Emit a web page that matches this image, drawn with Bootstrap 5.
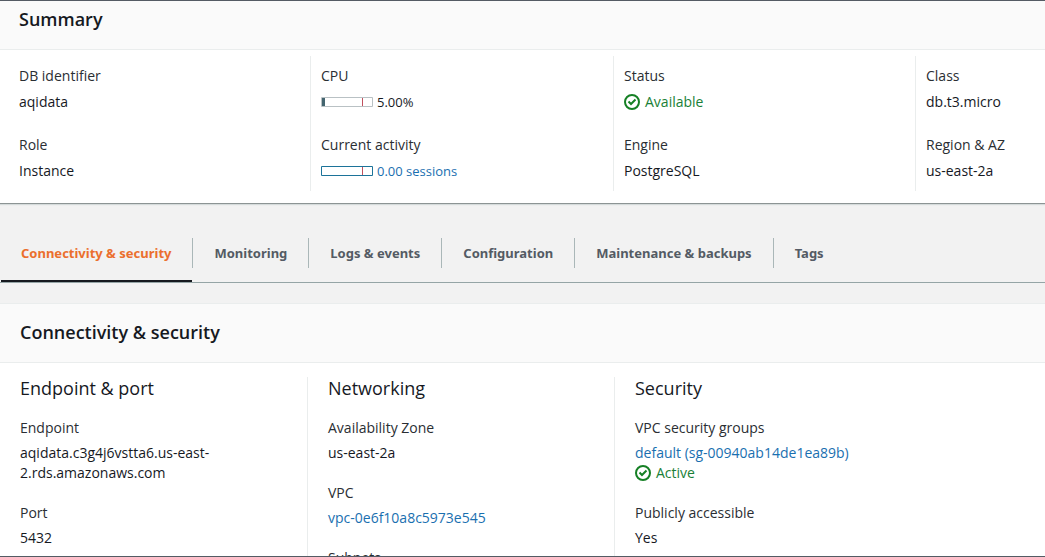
<!DOCTYPE html>
<html lang="en">
<head>
<meta charset="utf-8">
<meta name="viewport" content="width=device-width, initial-scale=1">
<title>aqidata - RDS</title>
<link href="https://cdn.jsdelivr.net/npm/bootstrap@5.3.0/dist/css/bootstrap.min.css" rel="stylesheet">
<script src="https://cdn.jsdelivr.net/npm/bootstrap@5.3.0/dist/js/bootstrap.bundle.min.js"></script>
<style>
body { font-family: "Open Sans", "Noto Sans", sans-serif; font-size: 14px; line-height: 20px; color: #16191f; background: #f2f2f2; }
a { color: #1a6fb0; text-decoration: none; }
a:hover { text-decoration: underline; }
.console { border-top: 1px solid #545b64; border-bottom: 1px solid #545b64; }
.panel { background: #fff; }
.panel-head { background: #fafafa; border-bottom: 1px solid #eaeded; padding: 17px 20px 19px; }
.panel-head h2 { font-size: 18px; line-height: 22px; font-weight: 600; margin: 0; }
.summary-panel { border-bottom: 1px solid #8c9494; box-shadow: 0 1px 1px #d5dbdb; }
.summary-panel .panel-head { padding: 7px 19px 19px; }
.summary-grid { display: grid; grid-template-columns: 311fr 303fr 302fr 129fr; padding: 6px 0 12px; }
.summary-grid > dl { padding: 10px; }
.summary-grid > dl:first-child { padding-left: 19px; }
.detail-grid { display: grid; grid-template-columns: 308fr 307fr 430fr; padding-top: 14px; }
.detail-grid > section { padding: 0 20px; }
.split { border-right: 1px solid #eaeded; }
dl, dd { margin: 0; }
dt { font-weight: 400; color: #2a2e33; }
.summary-grid dt { margin-bottom: 6px; }
.summary-grid dd + dt { margin-top: 23px; }
.detail-grid h3 { font-size: 18px; line-height: 22px; font-weight: 400; margin: 0 0 19px; }
.detail-grid dt { margin-bottom: 5px; }
.detail-grid dd + dt { margin-top: 20px; }
.ok { color: #1a7f37; gap: 5px; }
.metric { font-size: 13px; }
.meter-box { display: block; width: 52px; height: 10px; flex: none; }
.tabs-bar { margin: 34px 0 20px; padding-left: 1px; border-bottom: 1px solid #95a5a6; }
.tabs-bar .nav-link { color: #545b64; font-family: "Noto Sans", "Open Sans", sans-serif; font-size: 13px; font-weight: 700; line-height: 20px; padding: 0 0 12px; border-bottom: 2px solid transparent; }
.tabs-bar .nav-link span { display: block; padding: 5px 21px 5px 20px; }
.tabs-bar .nav-item:not(:first-child) .nav-link span { padding-left: 21px; border-left: 1px solid #aab7b8; }
.tabs-bar .nav-link.active { color: #eb6f2d; border-bottom-color: #16191f; }
.detail-panel { border-top: 1px solid #eaeded; }
</style>
</head>
<body>
<main class="console vh-100 overflow-hidden d-flex flex-column">
  <section class="panel summary-panel flex-shrink-0">
    <header class="panel-head"><h2>Summary</h2></header>
    <div class="summary-grid">
      <dl class="split">
        <dt>DB identifier</dt><dd>aqidata</dd>
        <dt>Role</dt><dd>Instance</dd>
      </dl>
      <dl class="split">
        <dt>CPU</dt>
        <dd class="metric d-flex align-items-center gap-1">
          <svg class="meter-box" viewBox="0 0 52 10" aria-hidden="true"><path d="M.5.5h51v9H.5z" fill="#fff" stroke="#b9c1c4"/><path d="M1 1h3v8H1z" fill="#44656f"/><path d="M41.500 1v8" stroke="#c0505e"/></svg>5.00%
        </dd>
        <dt>Current activity</dt>
        <dd><a href="#" class="metric d-flex align-items-center gap-1">
          <svg class="meter-box" viewBox="0 0 52 10" aria-hidden="true"><path d="M.5.5h51v9H.5z" fill="#fff" stroke="#1c7399"/><path d="M41.500 1v8" stroke="#c0505e"/></svg>0.00 sessions</a></dd>
      </dl>
      <dl class="split">
        <dt>Status</dt>
        <dd class="ok d-flex align-items-center">
          <svg width="16" height="16" viewBox="0 0 16 16" fill="none" stroke="#168025" stroke-width="2" aria-hidden="true"><circle cx="8" cy="8" r="7"/><path d="M4.500 7.500 7 10l4.500-4.500"/></svg>Available
        </dd>
        <dt>Engine</dt><dd>PostgreSQL</dd>
      </dl>
      <dl>
        <dt>Class</dt><dd>db.t3.micro</dd>
        <dt>Region &amp; AZ</dt><dd>us-east-2a</dd>
      </dl>
    </div>
  </section>

  <ul class="nav tabs-bar flex-nowrap flex-shrink-0">
    <li class="nav-item"><a class="nav-link active" aria-current="page" href="#"><span>Connectivity &amp; security</span></a></li>
    <li class="nav-item"><a class="nav-link" href="#"><span>Monitoring</span></a></li>
    <li class="nav-item"><a class="nav-link" href="#"><span>Logs &amp; events</span></a></li>
    <li class="nav-item"><a class="nav-link" href="#"><span>Configuration</span></a></li>
    <li class="nav-item"><a class="nav-link" href="#"><span>Maintenance &amp; backups</span></a></li>
    <li class="nav-item"><a class="nav-link" href="#"><span>Tags</span></a></li>
  </ul>

  <section class="panel detail-panel flex-shrink-0">
    <header class="panel-head"><h2>Connectivity &amp; security</h2></header>
    <div class="detail-grid">
      <section class="split">
        <h3>Endpoint &amp; port</h3>
        <dl>
          <dt>Endpoint</dt><dd>aqidata.c3g4j6vstta6.us-east-<wbr>2.rds.amazonaws.com</dd>
          <dt>Port</dt><dd>5432</dd>
        </dl>
      </section>
      <section class="split">
        <h3>Networking</h3>
        <dl>
          <dt>Availability Zone</dt><dd>us-east-2a</dd>
          <dt>VPC</dt><dd><a href="#">vpc-0e6f10a8c5973e545</a></dd>
          <dt>Subnets</dt>
        </dl>
      </section>
      <section>
        <h3>Security</h3>
        <dl>
          <dt>VPC security groups</dt>
          <dd>
            <a href="#">default (sg-00940ab14de1ea89b)</a>
            <div class="ok d-flex align-items-center">
              <svg width="16" height="16" viewBox="0 0 16 16" fill="none" stroke="#168025" stroke-width="2" aria-hidden="true"><circle cx="8" cy="8" r="7"/><path d="M4.500 7.500 7 10l4.500-4.500"/></svg>Active
            </div>
          </dd>
          <dt>Publicly accessible</dt><dd>Yes</dd>
        </dl>
      </section>
    </div>
  </section>
</main>
</body>
</html>
